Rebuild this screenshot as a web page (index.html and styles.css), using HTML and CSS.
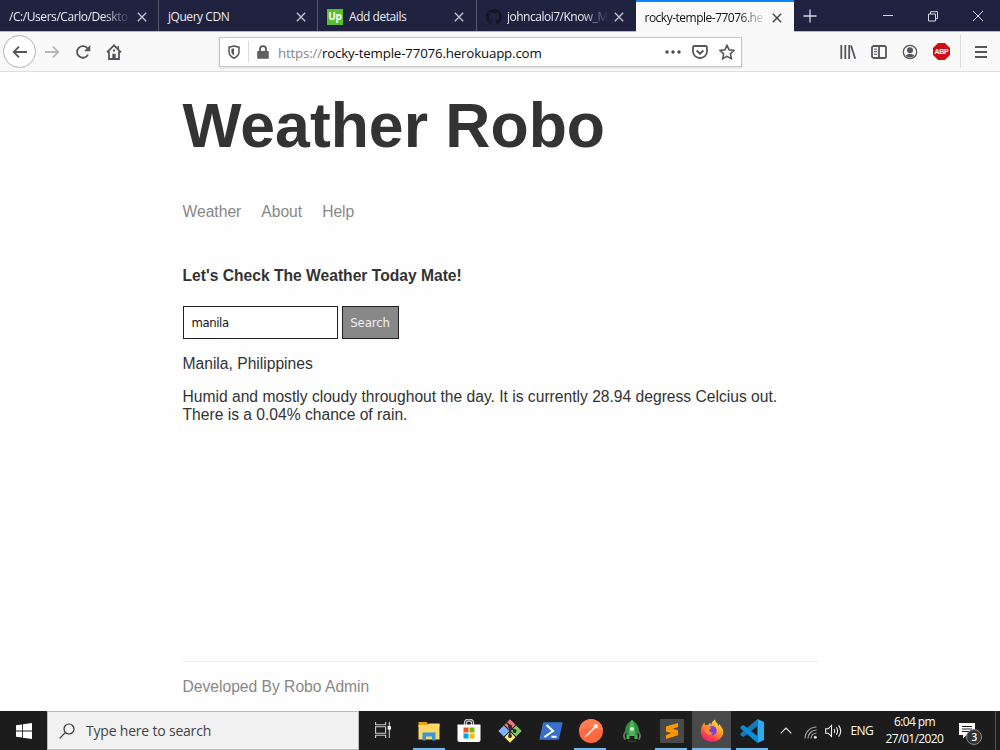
FILE: index.html
```html
<!DOCTYPE html>
<html lang="en">
<head>
<meta charset="utf-8">
<title>Weather Robo</title>
<link rel="stylesheet" href="styles.css">
</head>
<body>
<div class="screen">
  <header class="tabs">
    <div class="tab"><span class="tab-title t-path fade">/C:/Users/Carlo/Deskto</span><svg class="close" viewBox="0 0 10 10"><path d="M.8.8l8.4 8.4M9.2.8L.8 9.2"/></svg></div>
    <div class="tab"><span class="tab-title t-jq">jQuery CDN</span><svg class="close" viewBox="0 0 10 10"><path d="M.8.8l8.4 8.4M9.2.8L.8 9.2"/></svg></div>
    <div class="tab"><span class="up-logo">Up</span><span class="tab-title t-add">Add details</span><svg class="close" viewBox="0 0 10 10"><path d="M.8.8l8.4 8.4M9.2.8L.8 9.2"/></svg></div>
    <div class="tab"><svg class="github" viewBox="0 0 16 16"><path fill="#15161f" d="M8 0C3.58 0 0 3.58 0 8c0 3.54 2.29 6.53 5.47 7.59.4.07.55-.17.55-.38 0-.19-.01-.82-.01-1.49-2.01.37-2.53-.49-2.69-.94-.09-.23-.48-.94-.82-1.13-.28-.15-.68-.52-.01-.53.63-.01 1.08.58 1.23.82.72 1.21 1.87.87 2.33.66.07-.52.28-.87.51-1.07-1.78-.2-3.64-.89-3.64-3.95 0-.87.31-1.59.82-2.15-.08-.2-.36-1.02.08-2.12 0 0 .67-.21 2.2.82.64-.18 1.32-.27 2-.27s1.36.09 2 .27c1.53-1.04 2.2-.82 2.2-.82.44 1.1.16 1.92.08 2.12.51.56.82 1.27.82 2.15 0 3.07-1.87 3.75-3.65 3.95.29.25.54.73.54 1.48 0 1.07-.01 1.93-.01 2.2 0 .21.15.46.55.38A8.01 8.01 0 0016 8c0-4.42-3.58-8-8-8z"/></svg><span class="tab-title t-git fade">johncaloi7/Know_M</span><svg class="close" viewBox="0 0 10 10"><path d="M.8.8l8.4 8.4M9.2.8L.8 9.2"/></svg></div>
    <div class="tab active"><span class="tab-title t-rocky fade">rocky-temple-77076.he</span><svg class="close" viewBox="0 0 10 10"><path d="M.8.8l8.4 8.4M9.2.8L.8 9.2"/></svg></div>
    <svg class="newtab" viewBox="0 0 14 14"><path d="M7 .5v13M.5 7h13"/></svg>
    <div class="window-controls">
      <svg viewBox="0 0 12 12"><path d="M1 5.5h10"/></svg>
      <svg viewBox="0 0 12 12"><path d="M1.5 4h7v7h-7zM3.5 4V1.7h7v7h-2"/></svg>
      <svg viewBox="0 0 12 12"><path d="M1 1l10 10M11 1L1 11"/></svg>
    </div>
  </header>

  <div class="toolbar">
    <div class="back"><svg class="ic16" viewBox="0 0 16 16"><path d="M15 8H2M7 2.7L1.7 8 7 13.3"/></svg></div>
    <svg class="ic16 forward" viewBox="0 0 16 16"><path d="M1 8h13M9 2.7L14.3 8 9 13.3"/></svg>
    <svg class="ic16 reload" viewBox="0 0 16 16"><path d="M13 10.6A5.8 5.8 0 1 1 12.6 4.6"/><path class="fill" d="M15.3 1v6.2H9.1z"/></svg>
    <svg class="ic16 home" viewBox="0 0 16 16"><path d="M1 8.3L8 1.3l7 7M3 7.5V15h10V7.5"/><path class="fill" d="M6.3 9.8h3.4V15H6.3zM7 5.5h2v2H7zM11.5 2H13v4l-1.5-1.5z"/></svg>
    <div class="urlbar">
      <svg class="shield" viewBox="0 0 12 14"><path d="M6 .9l5 1.3v4.6c0 3-2 5-5 6.4C3 11.8 1 9.8 1 6.8V2.2z"/><path class="fill" d="M6 3.3v7.2C4 9.3 3.4 8.2 3.4 6.5V4z"/></svg>
      <span class="url-sep"></span>
      <svg class="lock" viewBox="0 0 12 14"><path d="M3 7V4.2a3 3 0 0 1 6 0V7"/><rect x=".2" y="6" width="11.6" height="7.8" rx="1"/></svg>
      <span class="url"><span class="scheme">https://</span>rocky-temple-77076.herokuapp.com</span>
      <svg class="dots" viewBox="0 0 16 4"><circle cx="2" cy="2" r="1.7"/><circle cx="8" cy="2" r="1.7"/><circle cx="14" cy="2" r="1.7"/></svg>
      <svg class="ic16 pocket" viewBox="0 0 16 16"><path d="M2.500 2h11a1.500 1.500 0 0 1 1.500 1.500v4a7 6.500 0 0 1-14 0v-4A1.500 1.500 0 0 1 2.500 2zM4.600 6.500L8 9.700l3.400-3.200"/></svg>
      <svg class="ic16 star" viewBox="0 0 16 16"><path d="M8 1.300l2.100 4.500 4.900.6-3.600 3.400.9 4.900L8 12.300l-4.300 2.400.9-4.900L1 6.400l4.900-.6z"/></svg>
    </div>
    <div class="tools">
      <svg class="ic16" viewBox="0 0 16 16"><path d="M1.300 1v14M5.300 1v14M9.200 1v14M11 1.500l4.200 13.300"/></svg>
      <svg class="ic16" viewBox="0 0 16 16"><rect x="1" y="2" width="14" height="12" rx="1.800"/><path d="M8 2v12"/><path class="thin" d="M3 5.200h3M3 7.700h3M3 10.200h3"/></svg>
      <svg class="account" viewBox="0 0 16 16"><circle class="ring" cx="8" cy="8" r="6.700"/><circle class="fill" cx="8" cy="6.300" r="3"/><path class="fill" d="M3.700 11.800c1-1 2-1.800 2.800-1.800h3c.8 0 1.800.8 2.800 1.800-2 2.200-6.600 2.200-8.600 0z"/></svg>
      <span class="abp">ABP</span>
    </div>
    <span class="menu-sep"></span>
    <svg class="burger" viewBox="0 0 12 12"><path d="M0 1h12M0 6h12M0 11h12"/></svg>
  </div>

  <main class="page">
    <h1>Weather Robo</h1>
    <nav><a>Weather</a><a>About</a><a>Help</a></nav>
    <h4>Let's Check The Weather Today Mate!</h4>
    <form><div class="field">manila</div><div class="button">Search</div></form>
    <p>Manila, Philippines</p>
    <p>Humid and mostly cloudy throughout the day. It is currently 28.94 degress Celcius out.<br>There is a 0.04% chance of rain.</p>
    <footer>Developed By Robo Admin</footer>
  </main>

  <div class="taskbar">
    <div class="start"><svg viewBox="0 0 16 16"><path fill="#fff" d="M0 2.300L6.200 1.400v6.200H0zM7 1.300L16 0v7.600H7zM0 8.400h6.200v6.200L0 13.700zM7 8.400h9V16L7 14.700z"/></svg></div>
    <div class="search"><svg viewBox="0 0 16 16"><circle cx="10" cy="6" r="5"/><path d="M6.300 9.700L.6 15.400"/></svg><span>Type here to search</span></div>
    <svg class="taskview" viewBox="0 0 16 16"><path d="M.6 0v2.800h10V0M.6 16v-2.800h10V16M.6 4.800h10v6.400H.6zM14.300 0v16"/><path class="knob" d="M12.700 4h3.300v3.500h-3.300z"/></svg>
    <div class="apps">
      <div class="app open"><svg viewBox="0 0 24 24"><path fill="#e8a317" d="M1.500 3h8l1.500 2h11.500v3h-21z"/><path fill="#ffd766" d="M1.500 6h9l1.500-1.500h10.500V20.500h-21z"/><path fill="#3496dc" d="M5.500 13.500h13V21.500h-3.500v-4H9v4H5.500z"/></svg></div>
      <div class="app"><svg viewBox="0 0 24 24"><path fill="none" stroke="#ccc" stroke-width="1.300" d="M7.500 6V3.500a4.500 3.500 0 0 1 9 0V6M9.500 6V4a2.500 2 0 0 1 5 0v2"/><path fill="#fff" d="M.5 5.500h23V21q0 2-2 2H2.500q-2 0-2-2z"/><path fill="#f25022" d="M6.500 8.500h5v5h-5z"/><path fill="#7fba00" d="M12.500 8.500h5v5h-5z"/><path fill="#00a4ef" d="M6.500 14.500h5v5h-5z"/><path fill="#ffb900" d="M12.500 14.500h5v5h-5z"/></svg></div>
      <div class="app"><svg viewBox="0 0 24 24"><path fill="#f1777c" d="M12 .2l5.500 5.500L12 11.200 6.500 5.700z"/><path fill="#80b3ff" d="M5.800 6.500L11.300 12l-5.500 5.500L.3 12z"/><path fill="#7dcc68" d="M18.200 6.500l5.500 5.500-5.500 5.500-5.500-5.500z"/><path fill="#ffe680" d="M12 12.800l5.500 5.500L12 23.800l-5.500-5.500z"/><path stroke="#282828" stroke-width="1.600" fill="none" d="M8.500 3.500L12 7v10M12 7.500l4.500 4.500"/><g fill="#282828"><circle cx="12" cy="7.500" r="1.900"/><circle cx="12" cy="17" r="1.900"/><circle cx="16.700" cy="12" r="1.900"/></g></svg></div>
      <div class="app"><svg viewBox="0 0 24 24"><path fill="#3a70cc" d="M5 3.200h18q.8 0 .6.800L20 20q-.2.800-1 .8H1q-.8 0-.6-.8L4 4q.2-.8 1-.8z"/><path fill="none" stroke="#fff" stroke-width="2" d="M7.500 6l6.500 6-8.500 6M12.500 17.700h5"/></svg></div>
      <div class="app open"><svg viewBox="0 0 24 24"><circle cx="12" cy="12" r="12" fill="#ff6840"/><path fill="#ff8b5c" d="M0 12a12 12 0 0 1 24 0Q12 5 0 12z" opacity=".6"/><path fill="#ffe4d9" d="M5.500 18.500l1.200-2.200 8-8 1.300 1.300-7 6.900z"/><circle cx="16.800" cy="7.200" r="2.200" fill="#ffe4d9"/></svg></div>
      <div class="app"><svg viewBox="0 0 24 24"><path fill="none" stroke="#6c7c68" stroke-width="1.600" d="M6.500 11.500Q2 16 5.300 20.500M17.500 11.500Q22 16 18.700 20.500"/><path fill="#2f8d43" d="M12 .8Q3.500 7 5.500 13L7.500 17h9l2-4Q20.500 7 12 .8z"/><path fill="#4fb556" d="M12 .8Q7.500 8 9.500 17h5Q16.500 8 12 .8z"/><circle cx="12" cy="10" r="2.100" fill="#c8e9d7"/><path fill="#4caf50" d="M6.500 15.500l3 1v3.500H6.500zM17.500 15.500l-3 1v3.500h3z"/><path fill="#484848" d="M8 21.800h8v1H8z"/></svg></div>
      <div class="app open"><svg viewBox="0 0 24 24"><rect width="24" height="24" rx="1" fill="#4a4a4a"/><path fill="#ff9800" d="M6 7.500L18 4v4l-5.500 1.700L18 11.300v4.900L6 20v-4l5.500-1.800L6 12.600z"/></svg></div>
      <div class="app open current"><svg viewBox="0 0 24 24"><defs><linearGradient id="fx" x1=".8" y1="0" x2=".2" y2="1"><stop offset="0" stop-color="#fff24a"/><stop offset=".45" stop-color="#ff9425"/><stop offset=".75" stop-color="#ff3b50"/><stop offset="1" stop-color="#e51c89"/></linearGradient></defs><path fill="url(#fx)" d="M2.600 6Q3.500 4 4.500 3.500q0 1.700.7 2.500L8 6.200q1-2 2.500-2.400-.3 1.700.8 2.200Q12 2 15 .5q0 2 2.500 4Q18 6 19 7v-2q5 5 4.300 9.500A11.500 10.500 0 0 1 .8 14.500Q0 10 2.600 6z"/><circle cx="12" cy="11.700" r="4.700" fill="#7542e5"/><path fill="#ff8b2c" d="M5 8.500q4-2.500 6.500.5-1 1.200-2.500 1.500 0 3 4 3.200-1.500 3-4.500 2Q4 14 5 8.500z"/></svg></div>
      <div class="app open"><svg viewBox="0 0 24 24"><path fill="#1479bd" d="M17.500 0v7L3.500 18 .5 16.300v-1.800z"/><path fill="#0d8bd7" d="M17.500 24v-7L3.500 6 .5 7.700v1.800z"/><path fill="#2eaaf3" d="M17.500 0L24 3v18l-6.500 3z"/></svg></div>
    </div>
    <div class="tray">
      <svg class="chev" viewBox="0 0 12 7"><path d="M.7 6.300L6 1l5.300 5.300"/></svg>
      <svg class="wifi" viewBox="0 0 13 13"><path d="M1 12.500A11.500 11.500 0 0 1 12.500 1M4 12.500A8.500 8.500 0 0 1 12.500 4M7 12.500A5.500 5.500 0 0 1 12.500 7"/><circle cx="11.300" cy="11.300" r="1.500"/></svg>
      <svg class="sound" viewBox="0 0 17 14"><path d="M.7 4.700h2.600L6.500 1.500v11L3.300 9.300H.7zM9 5q1.300 2 0 4M11.300 3.200q2.600 3.800 0 7.600M13.600 1.400q4.200 5.600 0 11.200"/></svg>
      <span class="lang">ENG</span>
      <div class="clock"><span class="time">6:04 pm</span><span class="date">27/01/2020</span></div>
      <div class="notes"><svg viewBox="0 0 16 16"><path fill="#fff" d="M0 0h16v12H7.500L4 15.500V12H0z"/><path stroke="#1c1c1c" d="M3 3.500h10M3 6h10M3 8.500h7"/></svg><span class="count">3</span></div>
      <span class="desktop-edge"></span>
    </div>
  </div>
</div>
</body>
</html>
```
FILE: styles.css
```css
* { box-sizing: border-box; }
body { margin: 0; background: #fefefe; overflow: hidden; }
svg { display: block; flex: none; }
.screen {
  width: 1000px; height: 750px;
  display: grid; grid-template-rows: 32px 40px 639px 39px;
  font-family: "Open Sans", "Noto Sans", sans-serif;
}

/* tab strip */
.tabs { display: flex; background: #202340; border-bottom: 1px solid #b8b9c4; }
.tab {
  width: 159px; height: 31px; flex: none; display: flex; align-items: center;
  padding: 3px 12px 0 9px; border-right: 1px solid #555768; color: #e9e9ef;
}
.tab:nth-child(1) .close, .tab:nth-child(2) .close { position: relative; left: .5px; }
.tab:nth-child(4) { width: 158.5px; border-right: 0; }
.tab.active { width: 158.5px; height: 32px; background: #f9f9fa; color: #111; border-top: 2px solid #0a84ff; border-right: 0; padding-top: 1px; }
.tab-title { flex: 1; min-width: 0; white-space: nowrap; font-size: 12px; line-height: 20px; margin-right: 7px; }
.fade { mask-image: linear-gradient(to right, #000 calc(100% - 26px), transparent calc(100% + 2px)); }
.t-path { letter-spacing: -.44px; }
.t-jq { letter-spacing: -.45px; }
.t-add { letter-spacing: -.45px; }
.t-git { letter-spacing: -.5px; }
.t-rocky { letter-spacing: -.5px; }
.close { width: 10px; height: 10px; fill: none; stroke: #bfc0ca; stroke-width: 1.4; }
.active .close { stroke: #444; }
.up-logo {
  width: 16px; height: 16px; margin-right: 6px; background: #5bbc2e; color: #fff;
  font: bold 10px/14px "Open Sans", sans-serif; text-align: center; letter-spacing: -.3px;
}
.github { width: 16px; height: 16px; margin-right: 5px; }
.newtab { width: 14px; height: 14px; margin: 9px 0 0 9px; fill: none; stroke: #d5d6df; stroke-width: 1.3; }
.window-controls { display: flex; gap: 33px; margin: 10px 0 0 65px; }
.window-controls svg { width: 12px; height: 12px; fill: none; stroke: #d5d6df; stroke-width: 1; }

/* navigation toolbar */
.toolbar { display: flex; align-items: center; background: #f9f9fa; border-bottom: 1px solid #dedede; padding-left: 3px; }
.ic16 { width: 16px; height: 16px; }
.toolbar svg { fill: none; stroke: #55555a; stroke-width: 1.8; }
.toolbar .fill { fill: #55555a; stroke: none; }
.back { width: 33px; height: 33px; border: 1px solid #b2b2b4; border-radius: 50%; background: #fff; display: grid; place-items: center; }
.toolbar .forward { margin-left: 8px; stroke: #b7b7ba; }
.reload { margin-left: 15px; }
.home { margin-left: 15px; }
.urlbar {
  width: 523px; height: 30px; margin-left: 97px; border: 1px solid #c6c6c8; background: #fff;
  display: flex; align-items: center; padding-left: 8px; box-shadow: 0 1px 2px rgba(0,0,0,.12);
}
.toolbar .shield { width: 12px; height: 14px; stroke-width: 1.5; }
.url-sep { width: 1px; height: 21px; background: #d9d9db; margin-left: 8px; }
.lock { width: 12px; height: 14px; margin-left: 8px; }
.lock rect { fill: #5f5f63; stroke: none; }
.url { width: 387px; padding-top: 2px; margin-left: 9px; font-size: 13.3px; line-height: 20px; letter-spacing: -.17px; color: #0c0c0d; white-space: nowrap; }
.scheme { color: #86868a; }
.toolbar .dots { width: 16px; height: 4px; fill: #4a4a4f; stroke: none; }
.pocket { margin-left: 11px; }
.toolbar .star { margin-left: 11px; stroke-width: 1.6; }
.tools { display: flex; align-items: center; gap: 15px; margin-left: 98px; }
.toolbar .thin { stroke-width: 1; }
.toolbar .ring { stroke-width: 1.3; }
.account { width: 16px; height: 16px; }
.abp {
  width: 17px; height: 17px; background: #d00c14; color: #fff; font: bold 7px/17px "Liberation Sans", sans-serif;
  letter-spacing: -.2px; text-align: center; clip-path: polygon(30% 0, 70% 0, 100% 30%, 100% 70%, 70% 100%, 30% 100%, 0 70%, 0 30%);
}
.menu-sep { width: 1px; height: 33px; background: #dddde0; margin-left: 10px; }
.burger { width: 12px; height: 12px; margin-left: 14px; }

/* weather page */
.page { width: 635px; margin-left: 182.5px; font: 15.63px/17.6px "Liberation Sans", Arial, sans-serif; color: #333; display: flex; flex-direction: column; }
h1 { margin: 16px 0 0; font-size: 62.5px; line-height: 74px; }
nav { display: flex; gap: 20px; margin-top: 41px; color: #888; }
h4 { margin: 46px 0 0; font-size: 15.63px; line-height: 18px; }
form { display: flex; gap: 4px; margin: 21px 0 16px; font: 11.7px/33px "DejaVu Sans", "Open Sans", sans-serif; }
.field { width: 155px; height: 33px; border: 1px solid #222; background: #fff; color: #201020; padding-left: 8px; letter-spacing: -.4px; }
.button { width: 57px; height: 33px; border: 1px solid #222; background: #888; color: #f0f0f0; text-align: center; letter-spacing: -.1px; }
p { margin: 0 0 15.5px; white-space: nowrap; }
p + p { margin-top: .4px; }
footer { margin-top: auto; height: 50px; border-top: 1px solid #eee; padding-top: 16px; color: #888; }

/* taskbar */
.taskbar { display: flex; background: #1c1c1c; color: #fff; }
.start { width: 47px; display: grid; place-items: center; }
.start svg { width: 16px; height: 16px; }
.search { width: 312px; background: #f1f1f1; border: 1px solid #bbb; display: flex; align-items: center; padding-left: 11px; font-size: 14px; color: #444; white-space: nowrap; letter-spacing: -.2px; }
.search svg { width: 16px; height: 16px; margin-right: 11px; fill: none; stroke: #333; stroke-width: 1.2; }
.taskview { width: 16px; height: 16px; margin: 11px 0 0 16px; fill: none; stroke: #ccc; stroke-width: 1.1; }
.taskview .knob { fill: #fff; stroke: none; }
.apps { display: flex; margin-left: 17.5px; }
.app { width: 40.45px; height: 39px; display: grid; place-items: center; }
.app:nth-child(n+3):nth-child(-n+7) svg { margin-left: 1.5px; }
.app svg { width: 24px; height: 24px; }
.app.open { background: linear-gradient(#76b9ed, #76b9ed) center bottom / 32px 2px no-repeat; }
.app.current { background: linear-gradient(#76b9ed, #76b9ed) center bottom / 39px 2px no-repeat, linear-gradient(#4a4a4a, #4a4a4a) center / 39px 39px no-repeat; }
.tray { flex: 1; display: flex; align-items: center; padding-left: 8px; }
.tray > svg { fill: none; stroke: #eee; stroke-width: 1.1; }
.chev { width: 12px; height: 7px; }
.wifi { width: 13px; height: 13px; margin: 3px 0 0 12px; }
.tray > .wifi { stroke: #aaa; }
.wifi circle { fill: #ddd; stroke: none; }
.sound { width: 17px; height: 14px; margin-left: 8px; }
.lang { margin-left: 8px; width: 23px; font-size: 12px; letter-spacing: -.6px; }
.clock { width: 60px; margin-left: 11px; font-size: 12px; line-height: 17px; display: flex; flex-direction: column; align-items: center; letter-spacing: -.6px; white-space: nowrap; }
.time { margin-top: -2px; letter-spacing: -.6px; }
.notes { position: relative; width: 16px; height: 16px; margin-left: 15px; }
.notes svg { width: 16px; height: 16px; }
.count { position: absolute; left: 7px; top: 6px; width: 16px; height: 16px; border: 1px solid #888; border-radius: 50%; background: #333; font-size: 10px; line-height: 14px; text-align: center; font-weight: 600; }
.desktop-edge { width: 1px; height: 39px; background: #555; margin-left: auto; margin-right: 4px; }
```
